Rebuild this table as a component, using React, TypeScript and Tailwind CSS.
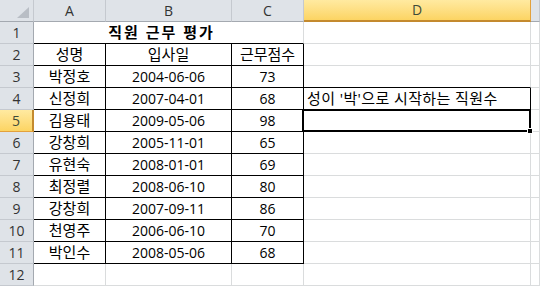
import React from "react";

const FONT = { fontFamily: '"Open Sans", "Noto Sans CJK KR", sans-serif' };

const rows = [
  ["박정호", "2004-06-06", "73"],
  ["신정희", "2007-04-01", "68"],
  ["김용태", "2009-05-06", "98"],
  ["강창희", "2005-11-01", "65"],
  ["유현숙", "2008-01-01", "69"],
  ["최정렬", "2008-06-10", "80"],
  ["강창희", "2007-09-11", "86"],
  ["천영주", "2006-06-10", "70"],
  ["박인수", "2008-05-06", "68"],
];

const GRID = "border-r border-b border-[#dadcdd]";
const BOX = "border-r border-b border-black";

function ColHead({ label, active }: { label: string; active?: boolean }) {
  if (active) {
    return (
      <div className="flex items-center justify-center border-r border-b-2 border-[#e3a13c] border-b-[#c48a2e] bg-gradient-to-b from-[#ffeaa0] to-[#fcd462] text-[14px] text-[#3d4b3a]">
        {label}
      </div>
    );
  }
  return (
    <div className="flex items-center justify-center border-r border-b border-[#c5c9cf] border-b-[#a4a9b0] bg-[#dfe3e8] text-[14px] text-[#333]">
      {label}
    </div>
  );
}

function RowHead({ n, active }: { n: number; active?: boolean }) {
  if (active) {
    return (
      <div className="flex items-center justify-center border-r-2 border-b border-[#e3a13c] border-r-[#c48a2e] bg-gradient-to-b from-[#ffeaa0] to-[#fcd462] text-[14px] text-[#3d4b3a]">
        {n}
      </div>
    );
  }
  return (
    <div className="flex items-center justify-center border-r border-b border-[#c5c9cf] border-r-[#a4a9b0] bg-[#dfe3e8] text-[14px] text-[#333]">
      {n}
    </div>
  );
}

export default function App() {
  return (
    <div className="h-[286px] w-[540px] overflow-hidden bg-white text-black" style={FONT}>
      <div className="grid grid-cols-[34px_72px_126px_72px_227px_1fr] auto-rows-[22px] text-[14px] leading-none">
        {/* column headers */}
        <div className="relative border-r border-b border-[#c5c9cf] border-b-[#a4a9b0] bg-[#dfe3e8]">
          <svg className="absolute right-[4px] bottom-[3px]" width="12" height="11" viewBox="0 0 12 11">
            <polygon points="12,0 12,11 0,11" fill="#b9bec5" />
          </svg>
        </div>
        <ColHead label="A" />
        <ColHead label="B" />
        <ColHead label="C" />
        <ColHead label="D" active />
        <ColHead label="" />

        {/* row 1: merged title */}
        <RowHead n={1} />
        <div className="col-span-3 flex items-center justify-center border-r border-b border-[#dadcdd] border-b-black pr-[14px] text-[15px] font-bold tracking-[2px]">
          직원 근무 평가
        </div>
        <div className={GRID} />
        <div className={GRID} />

        {/* row 2: table head */}
        <RowHead n={2} />
        <div className={`flex items-center justify-center text-[15px] ${BOX}`}>성명</div>
        <div className={`flex items-center justify-center text-[15px] ${BOX}`}>입사일</div>
        <div className={`flex items-center justify-center text-[15px] ${BOX}`}>근무점수</div>
        <div className={GRID} />
        <div className={GRID} />

        {rows.map((r, i) => {
          const n = i + 3;
          let d: React.ReactNode = <div className={GRID} />;
          if (n === 3) d = <div className="border-r border-b border-[#dadcdd] border-b-black" />;
          if (n === 4)
            d = (
              <div className={`flex items-center pl-[3px] text-[15px] tracking-[0.4px] ${BOX}`}>
                성이 '박'으로 시작하는 직원수
              </div>
            );
          if (n === 5)
            d = (
              <div className={`relative ${GRID}`}>
                <div className="absolute -top-[1px] -left-[2px] -right-[1px] -bottom-[1px] border-2 border-black" />
                <div className="absolute -right-[3px] -bottom-[3px] h-[6px] w-[6px] border border-white bg-black" />
              </div>
            );
          return (
            <React.Fragment key={n}>
              <RowHead n={n} active={n === 5} />
              <div className={`flex items-center justify-center text-[15px] ${BOX}`}>{r[0]}</div>
              <div className={`flex items-center justify-center ${BOX}`}>{r[1]}</div>
              <div className={`flex items-center justify-center ${BOX}`}>{r[2]}</div>
              {d}
              <div className={GRID} />
            </React.Fragment>
          );
        })}

        {/* row 12 */}
        <RowHead n={12} />
        <div className={GRID} />
        <div className={GRID} />
        <div className={GRID} />
        <div className={GRID} />
        <div className={GRID} />
      </div>
    </div>
  );
}
